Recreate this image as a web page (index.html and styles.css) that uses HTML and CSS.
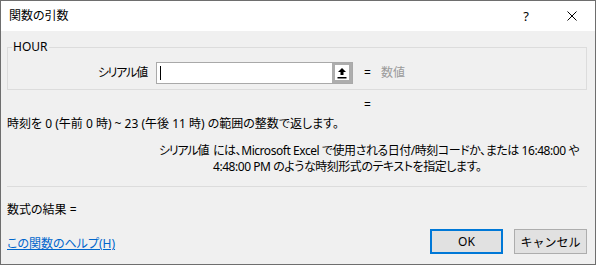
FILE: index.html
```html
<!DOCTYPE html>
<html lang="ja">
<head>
  <meta charset="UTF-8">
  <meta name="viewport" content="width=device-width, initial-scale=1.0">
  <title>関数の引数</title>
  <link rel="stylesheet" href="styles.css">
</head>
<body>
  <div class="dialog">
    <div class="titlebar">
      <span class="title">関数の引数</span>
      <span class="caption-btn help">?</span>
      <span class="caption-btn close">
        <svg width="10" height="10" viewBox="0 0 10 10">
          <path d="M0.5 0.5 L9.5 9.5 M9.5 0.5 L0.5 9.5" stroke="#000" stroke-width="1" fill="none"/>
        </svg>
      </span>
    </div>

    <div class="content">
      <fieldset class="group">
        <legend>HOUR</legend>
        <div class="arg-row">
          <label class="arg-label">シリアル値</label>
          <div class="ref-box">
            <div class="ref-input"><span class="caret"></span></div>
            <div class="ref-btn">
              <svg width="10" height="12" viewBox="0 0 10 12">
                <path d="M5 1 L9 5 L6.5 5 L6.5 8 L3.5 8 L3.5 5 L1 5 Z" fill="#000"/>
                <rect x="0.5" y="10" width="9" height="1.5" fill="#000"/>
              </svg>
            </div>
          </div>
          <span class="eq">=</span>
          <span class="value">数値</span>
        </div>
      </fieldset>

      <div class="eq-line">=</div>

      <p class="desc">時刻を 0 (午前 0 時) ~ 23 (午後 11 時) の範囲の整数で返します。</p>

      <div class="arg-help">
        <span class="help-label">シリアル値</span>
        <span class="help-text">には、Microsoft Excel で使用される日付/時刻コードか、または 16:48:00 や<br>4:48:00 PM のような時刻形式のテキストを指定します。</span>
      </div>

      <div class="separator"></div>

      <p class="result">数式の結果 =</p>

      <div class="footer">
        <a class="help-link" href="#">この関数のヘルプ(H)</a>
        <div class="buttons">
          <button class="btn btn-ok">OK</button>
          <button class="btn">キャンセル</button>
        </div>
      </div>
    </div>
  </div>
</body>
</html>
```

FILE: styles.css
```css
html, body {
  margin: 0;
  padding: 0;
}

body {
  font-family: "Noto Sans", "Noto Sans CJK JP", sans-serif;
  font-size: 12px;
  line-height: 16px;
  color: #000;
  background-color: #f0f0f0;
  font-feature-settings: "palt";
}

.dialog {
  width: 596px;
  height: 265px;
  box-sizing: border-box;
  border: 1px solid #6e6e6e;
  background-color: #f0f0f0;
  overflow: hidden;
}

.titlebar {
  display: flex;
  align-items: center;
  height: 30px;
  background-color: #fff;
}

.title {
  flex: 1;
  padding-left: 8px;
  font-size: 12px;
}

.caption-btn {
  display: flex;
  align-items: center;
  justify-content: center;
  width: 46px;
  height: 30px;
}

.help {
  font-size: 13px;
}

.content {
  padding: 0 8px 0 6px;
}

.group {
  margin: 8px 0 0 0;
  padding: 7px 0 5px 0;
  border: 1px solid #dcdcdc;
}

.group legend {
  margin-left: 4px;
  padding: 0 1px;
}

.arg-row {
  display: flex;
  align-items: center;
  height: 22px;
}

.arg-label {
  width: 139px;
  text-align: right;
  margin-right: 9px;
  letter-spacing: -1.2px;
}

.ref-box {
  display: flex;
  width: 197px;
  height: 22px;
  box-sizing: border-box;
  border: 1px solid #a9a9a9;
  background-color: #fff;
}

.ref-input {
  flex: 1;
  display: flex;
  align-items: center;
  padding-left: 3px;
}

.caret {
  width: 1px;
  height: 14px;
  background-color: #000;
}

.ref-btn {
  display: flex;
  align-items: center;
  justify-content: center;
  width: 14px;
  border: 3px solid #adadad;
  border-top-width: 2px;
  background-color: #fff;
}

.eq {
  margin-left: 11px;
}

.value {
  margin-left: 10px;
  color: #9a9a9a;
}

.eq-line {
  margin-top: 7px;
  padding-left: 357px;
}

.desc {
  margin: 3px 0 0 0;
}

.arg-help {
  display: flex;
  margin-top: 11px;
  padding-left: 152px;
}

.help-label {
  flex: 0 0 54px;
  white-space: nowrap;
  letter-spacing: -1.2px;
}

.help-text {
  white-space: nowrap;
  letter-spacing: -0.45px;
}

.separator {
  margin-top: 11px;
  border-top: 1px solid #dcdcdc;
}

.result {
  margin: 15px 0 0 0;
}

.footer {
  display: flex;
  align-items: center;
  justify-content: space-between;
  margin-top: 11px;
}

.help-link {
  color: #0066cc;
  padding-top: 5px;
}

.buttons {
  display: flex;
  gap: 11px;
}

.btn {
  width: 73px;
  height: 25px;
  padding: 0;
  font-family: "Noto Sans", "Noto Sans CJK JP", sans-serif;
  font-size: 12px;
  color: #000;
  background-color: #e1e1e1;
  border: 1px solid #adadad;
  border-radius: 0;
}

.btn-ok {
  border: 2px solid #0078d7;
}
```
